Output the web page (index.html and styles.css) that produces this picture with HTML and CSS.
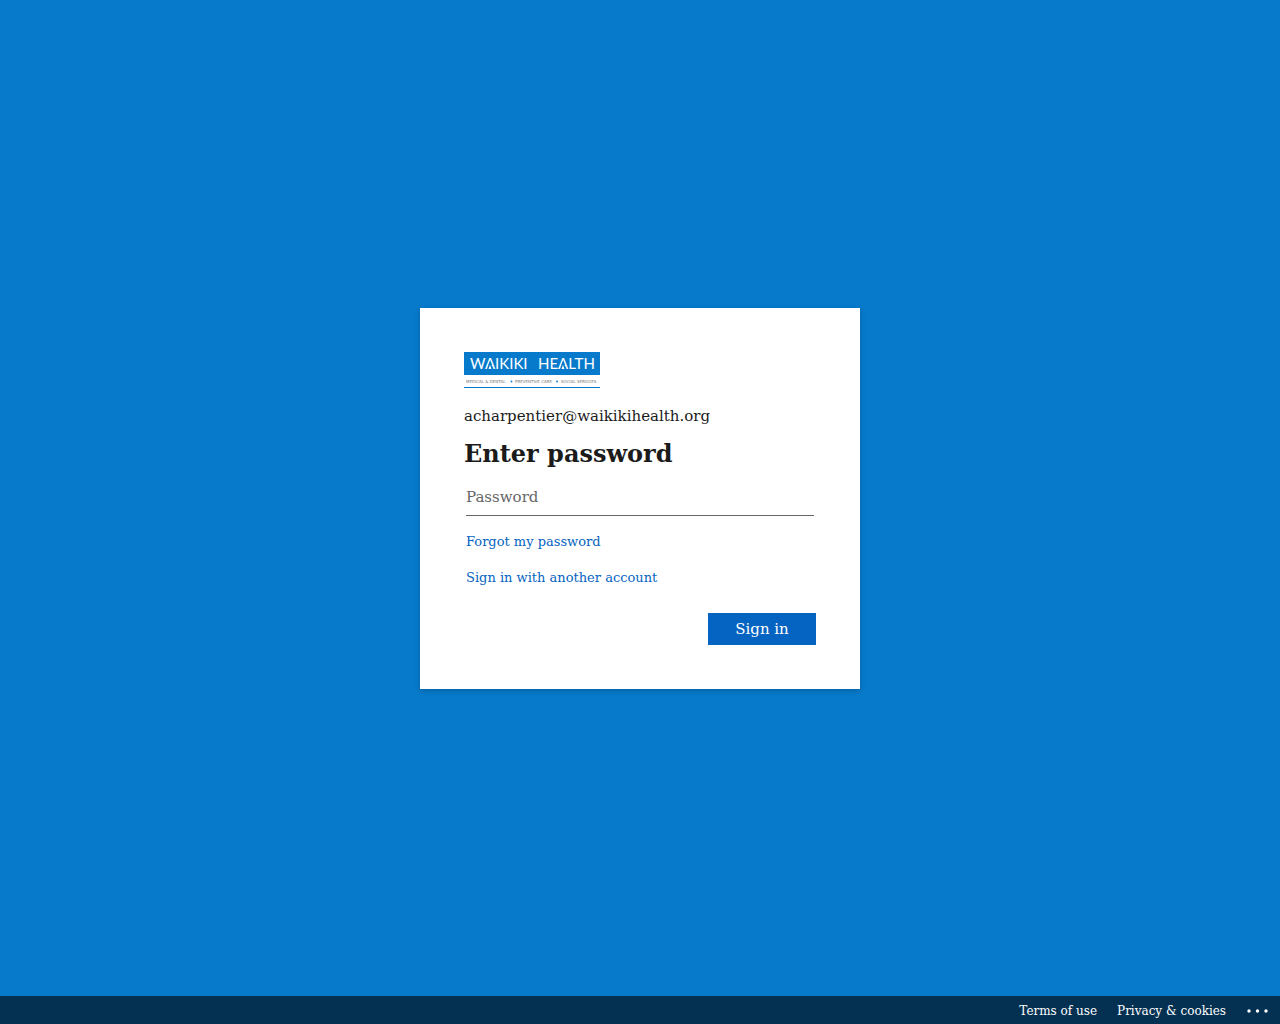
FILE: index.html
```html
<!DOCTYPE html>
<html lang="en">
<head>
<meta charset="utf-8">
<meta name="viewport" content="width=device-width, initial-scale=1">
<title>Sign in to your account</title>
<link rel="stylesheet" href="styles.css">
</head>
<body>
<main class="page">
  <form class="card">
    <svg class="logo" viewBox="0 0 136 36" role="img" aria-label="Waikiki Health: medical and dental, preventive care, social services">
      <rect class="logo-band" width="136" height="23"/>
      <text class="logo-name" x="6" y="17">WAIKIKI</text>
      <text class="logo-name" x="74" y="17">HEALTH</text>
      <path class="logo-band" d="M26 9l2.400 6h-4.800zM99 9l2.400 6h-4.800z"/>
      <path class="logo-peak" d="M26 13l1.500 4h-3zM99 13l1.500 4h-3z"/>
      <text class="logo-tag" x="2" y="31">MEDICAL &amp; DENTAL</text>
      <text class="logo-tag" x="51" y="31">PREVENTIVE CARE</text>
      <text class="logo-tag" x="97" y="31">SOCIAL SERVICES</text>
      <circle class="logo-band" cx="47.500" cy="29.500" r="0.900"/>
      <circle class="logo-band" cx="93" cy="29.500" r="0.900"/>
      <rect class="logo-band" y="35" width="136" height="1"/>
    </svg>
    <div class="identity">acharpentier@waikikihealth.org</div>
    <h1 class="title">Enter password</h1>
    <div class="fields">
      <input class="password" type="password" placeholder="Password" aria-label="Password">
      <a class="link" href="#">Forgot my password</a>
      <a class="link" href="#">Sign in with another account</a>
    </div>
    <button class="submit" type="submit">Sign in</button>
  </form>
</main>
<footer class="footer">
  <a class="footer-link" href="#">Terms of use</a>
  <a class="footer-link" href="#">Privacy &amp; cookies</a>
  <button class="more" type="button" aria-label="More options">
    <svg width="23" height="4" viewBox="0 0 23 4" aria-hidden="true"><circle cx="3" cy="2" r="1.7"/><circle cx="11.500" cy="2" r="1.7"/><circle cx="20" cy="2" r="1.7"/></svg>
  </button>
</footer>
</body>
</html>
```
FILE: styles.css
```css
* { box-sizing: border-box; }

body {
  margin: 0;
  min-height: 100vh;
  display: flex;
  flex-direction: column;
  background: #077acb;
  color: #1b1b1b;
  font-family: "DejaVu Serif", serif;
  font-size: 15px;
}

.page {
  flex: 1;
  display: flex;
  align-items: center;
  justify-content: center;
}

.card {
  display: flex;
  flex-direction: column;
  width: 100%;
  max-width: 440px;
  padding: 44px;
  background: #fff;
  box-shadow: 0 2px 6px rgba(0, 0, 0, 0.2);
}

.logo { width: 136px; height: 36px; }
.logo-band { fill: #077acb; }
.logo-peak { fill: #fff; }
.logo-name { fill: #fff; font-family: Lato, sans-serif; font-size: 15px; }
.logo-tag { fill: #777; font-family: "DejaVu Sans", sans-serif; font-size: 4px; }

.identity { margin-top: 16px; line-height: 24px; }

.title {
  margin: 12px 0;
  font-size: 24px;
  line-height: 28px;
}

.fields {
  display: flex;
  flex-direction: column;
  align-items: flex-start;
  gap: 16px;
  padding: 0 2px;
}

.password {
  width: 100%;
  height: 36px;
  padding: 0;
  border: 0;
  border-bottom: 1px solid #666;
  border-radius: 0;
  background: transparent;
  color: inherit;
  font: inherit;
  outline: 0;
}
.password::placeholder { color: #666; opacity: 1; }
.password:focus { border-color: #0564c1; }

.link {
  color: #0564c1;
  font-size: 13px;
  line-height: 20px;
  text-decoration: none;
}
.link:hover { text-decoration: underline; }

.submit {
  align-self: flex-end;
  width: 108px;
  height: 32px;
  margin-top: 25px;
  padding: 0;
  border: 0;
  background: #0564c1;
  color: #fff;
  font: inherit;
}

.footer {
  display: flex;
  align-items: center;
  justify-content: flex-end;
  gap: 20px;
  padding: 2px 11px 0;
  background: #043152;
}

.footer-link {
  color: #fff;
  font-size: 12px;
  line-height: 26px;
  text-decoration: none;
}

.more {
  display: flex;
  padding: 0;
  border: 0;
  background: none;
  fill: #fff;
}
```
